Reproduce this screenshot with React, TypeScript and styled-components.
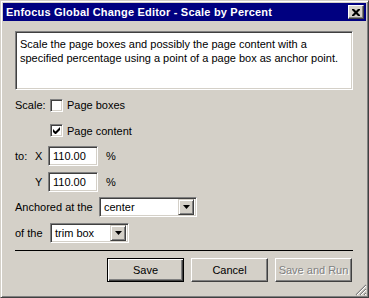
import React from "react";
import styled, { createGlobalStyle } from "styled-components";

const GlobalStyle = createGlobalStyle`
  html, body {
    margin: 0;
    padding: 0;
    background: #d4d0c8;
  }
  body {
    font-family: "Liberation Sans", Arial, sans-serif;
    font-size: 11px;
    color: #000;
  }
`;

const Window = styled.div`
  position: relative;
  width: 369px;
  height: 298px;
  box-sizing: border-box;
  padding: 2px;
  background: #d4d0c8;
  border: 1px solid;
  border-color: #d4d0c8 #404040 #404040 #d4d0c8;
  box-shadow: inset 1px 1px #fff, inset -1px -1px #808080;
  overflow: hidden;
`;

const TitleBar = styled.div`
  display: flex;
  align-items: center;
  height: 18px;
  padding: 0 2px 0 3px;
  background: #000080;
  color: #fff;
  font-weight: bold;
  font-size: 11px;
  letter-spacing: 0.2px;
`;

const TitleText = styled.span`
  flex: 1;
  white-space: nowrap;
`;

const CloseButton = styled.div`
  width: 16px;
  height: 14px;
  box-sizing: border-box;
  display: flex;
  align-items: center;
  justify-content: center;
  background: #d4d0c8;
  border: 1px solid;
  border-color: #fff #404040 #404040 #fff;
  box-shadow: inset -1px -1px #808080;
`;

const Body = styled.div`
  padding: 10px 13px 0 12px;
`;

const Description = styled.div`
  height: 59px;
  box-sizing: border-box;
  padding: 5px 3px 0;
  background: #fff;
  border: 1px solid;
  border-color: #808080 #fff #fff #808080;
  box-shadow: inset 1px 1px #404040, inset -1px -1px #d4d0c8;
  line-height: 14px;
`;

const DescText = styled.p`
  margin: 0;
  padding-left: 1px;
`;

const Form = styled.div`
  display: flex;
  flex-direction: column;
  gap: 5.6px;
  margin-top: 5px;
`;

const Row = styled.div<{ $indent?: number }>`
  display: flex;
  align-items: center;
  height: 20px;
  padding-left: ${(p) => p.$indent ?? 0}px;
`;

const Label = styled.span<{ $width: number }>`
  width: ${(p) => p.$width}px;
  flex-shrink: 0;
  white-space: nowrap;
`;

const CheckBox = styled.span`
  width: 13px;
  height: 13px;
  box-sizing: border-box;
  display: flex;
  align-items: center;
  justify-content: center;
  background: #fff;
  border: 1px solid;
  border-color: #808080 #fff #fff #808080;
  box-shadow: inset 1px 1px #404040, inset -1px -1px #d4d0c8;
`;

const CheckText = styled.span`
  margin-left: 4px;
`;

const Field = styled.div<{ $width: number }>`
  width: ${(p) => p.$width}px;
  height: 20px;
  box-sizing: border-box;
  display: flex;
  align-items: center;
  background: #fff;
  border: 1px solid;
  border-color: #808080 #fff #fff #808080;
  box-shadow: inset 1px 1px #404040, inset -1px -1px #d4d0c8;
  padding: 0 2px 0 4px;
`;

const FieldText = styled.span`
  flex: 1;
  white-space: nowrap;
`;

const Unit = styled.span`
  margin-left: 8px;
`;

const DropButton = styled.span`
  width: 16px;
  height: 16px;
  box-sizing: border-box;
  display: flex;
  align-items: center;
  justify-content: center;
  background: #d4d0c8;
  border: 1px solid;
  border-color: #d4d0c8 #404040 #404040 #d4d0c8;
  box-shadow: inset 1px 1px #fff, inset -1px -1px #808080;
`;

const Separator = styled.div`
  height: 1px;
  margin-top: 7px;
  background: #000;
`;

const ButtonRow = styled.div`
  display: flex;
  justify-content: flex-end;
  gap: 7px;
  margin-top: 7px;
  padding-right: 1px;
`;

const Button = styled.div<{ $default?: boolean; $disabled?: boolean }>`
  width: 77px;
  height: 24px;
  box-sizing: border-box;
  display: flex;
  align-items: center;
  justify-content: center;
  background: #d4d0c8;
  border: 1px solid;
  border-color: ${(p) =>
    p.$default ? "#000" : "#fff #404040 #404040 #fff"};
  box-shadow: ${(p) =>
    p.$default
      ? "inset 1px 1px #fff, inset -1px -1px #404040, inset -2px -2px #808080"
      : "inset -1px -1px #808080"};
  color: ${(p) => (p.$disabled ? "#808080" : "#000")};
  text-shadow: ${(p) => (p.$disabled ? "1px 1px #fff" : "none")};
`;

const Grip = styled.svg`
  position: absolute;
  right: 1px;
  bottom: 1px;
`;

const Check = () => (
  <svg width="7" height="7" viewBox="0 0 7 7">
    <path d="M0 2v3l2 2h1l4-4V0L2.5 4.5z" fill="#000" />
  </svg>
);

const Arrow = () => (
  <svg width="7" height="4" viewBox="0 0 7 4">
    <path d="M0 0h7L3.5 4z" fill="#000" />
  </svg>
);

const Select = ({ width, value }: { width: number; value: string }) => (
  <Field $width={width}>
    <FieldText>{value}</FieldText>
    <DropButton>
      <Arrow />
    </DropButton>
  </Field>
);

export default function App() {
  return (
    <>
      <GlobalStyle />
      <Window>
        <TitleBar>
          <TitleText>Enfocus Global Change Editor - Scale by Percent</TitleText>
          <CloseButton>
            <svg width="8" height="7" viewBox="0 0 8 7">
              <path
                d="M0 0h2l2 2 2-2h2v1L5.5 3.5 8 6v1H6L4 5 2 7H0V6l2.5-2.5L0 1z"
                fill="#000"
              />
            </svg>
          </CloseButton>
        </TitleBar>
        <Body>
          <Description>
            <DescText>
              Scale the page boxes and possibly the page content with a
              specified percentage using a point of a page box as anchor point.
            </DescText>
          </Description>
          <Form>
            <Row>
              <Label $width={35}>Scale:</Label>
              <CheckBox />
              <CheckText>Page boxes</CheckText>
            </Row>
            <Row $indent={35}>
              <CheckBox>
                <Check />
              </CheckBox>
              <CheckText>Page content</CheckText>
            </Row>
            <Row>
              <Label $width={20}>to:</Label>
              <Label $width={13}>X</Label>
              <Field $width={50}>
                <FieldText>110.00</FieldText>
              </Field>
              <Unit>%</Unit>
            </Row>
            <Row $indent={20}>
              <Label $width={13}>Y</Label>
              <Field $width={50}>
                <FieldText>110.00</FieldText>
              </Field>
              <Unit>%</Unit>
            </Row>
            <Row>
              <Label $width={84}>Anchored at the</Label>
              <Select width={98} value="center" />
            </Row>
            <Row>
              <Label $width={35}>of the</Label>
              <Select width={79} value="trim box" />
            </Row>
          </Form>
          <Separator />
          <ButtonRow>
            <Button $default>Save</Button>
            <Button>Cancel</Button>
            <Button $disabled>Save and Run</Button>
          </ButtonRow>
        </Body>
        <Grip width="12" height="12" viewBox="0 0 12 12">
          <path d="M11 1L1 11M11 5L5 11M11 9L9 11" stroke="#808080" strokeWidth="1.2" />
          <path d="M11 2L2 11M11 6L6 11M11 10L10 11" stroke="#fff" strokeWidth="1" />
        </Grip>
      </Window>
    </>
  );
}
